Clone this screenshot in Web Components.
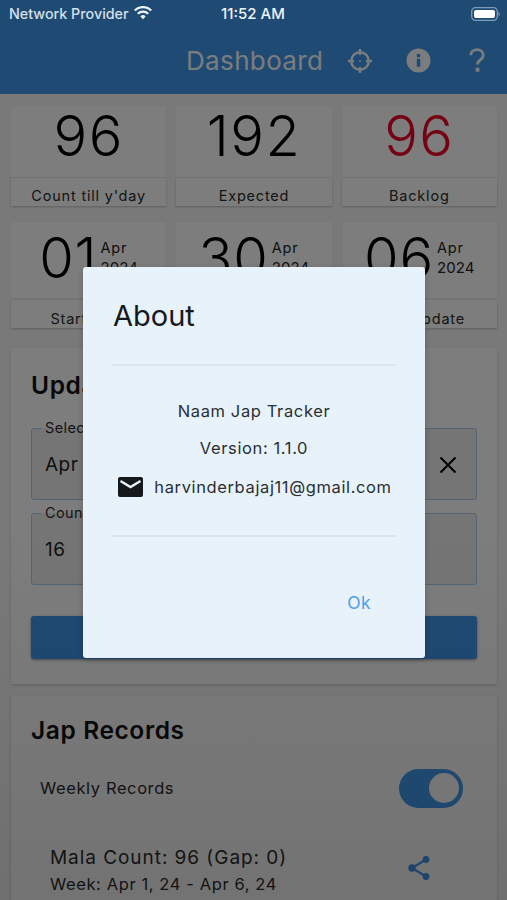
<!doctype html>
<html lang="en"><head><meta charset="utf-8"><title>Naam Jap Tracker</title>
<style>
html,body{margin:0;padding:0;height:900px;overflow:hidden;background:#eee;font-family:Inter,"Noto Sans",sans-serif}
</style></head><body>
<app-shell>
  <status-bar></status-bar>
  <app-bar></app-bar>
  <stat-row>
    <stat-card value="96" label="Count till y'day"></stat-card>
    <stat-card value="192" label="Expected"></stat-card>
    <stat-card value="96" label="Backlog" tone="bad"></stat-card>
  </stat-row>
  <stat-row class="dates">
    <stat-card value="01" month="Apr" year="2024" label="Start Date"></stat-card>
    <stat-card value="30" month="Apr" year="2024" label="End Date"></stat-card>
    <stat-card value="06" month="Apr" year="2024" label="Last Update"></stat-card>
  </stat-row>
  <update-card></update-card>
  <records-card></records-card>
  <about-dialog></about-dialog>
</app-shell>
<script>
function def(name, css, html){
  customElements.define(name, class extends HTMLElement{
    connectedCallback(){
      if(this.shadowRoot) return;
      const r=this.attachShadow({mode:'open'});
      r.innerHTML='<style>'+css+'</style>'+(typeof html==='function'?html(this):html);
    }
  });
}
def('app-shell',':host{display:block;position:relative;width:507px;height:900px;overflow:hidden;background:#f3f3f3}','<slot></slot>');
def('status-bar',`:host{display:flex;position:relative;z-index:3;height:27px;box-sizing:border-box;padding:0 7px 0 9px;align-items:center;color:#eef3f8;font-size:14.300px;font-weight:500;margin-bottom:-27px;justify-content:space-between}
 .l{display:flex;align-items:center;gap:5px;width:170px;color:#d4e0ea}
 .l svg{margin-top:-2px}
 .t{position:absolute;left:221px;top:5px;font-size:15px;line-height:18px;color:#eef3f8}
 .batt{width:29px;height:14px}`,`
 <div class="l"><span>Network Provider</span>
 <svg width="18" height="14" viewBox="0 0 18 14"><path d="M9 13.200 6.400 10.400a3.700 3.700 0 0 1 5.200 0zM4.600 8.600 3 6.900a8.500 8.500 0 0 1 12 0l-1.600 1.700a6.200 6.200 0 0 0-8.800 0zM1.500 5.300 0 3.700a12.700 12.700 0 0 1 18 0l-1.500 1.600a10.500 10.500 0 0 0-15 0z" fill="#eef3f8"/></svg></div>
 <span class="t">11:52 AM</span>
 <svg class="batt" viewBox="0 0 29 14"><rect x=".7" y=".7" width="25.600" height="12.600" rx="3.800" fill="none" stroke="#7f9ab4" stroke-width="1.300"/><rect x="3" y="3" width="21" height="8" rx="2" fill="#fff"/><path d="M27.500 5v4c.9-.4 1.300-1.100 1.300-2s-.4-1.600-1.300-2z" fill="#7f9ab4"/></svg>`);
def('app-bar',`:host{display:flex;height:94px;box-sizing:border-box;background:#3e94e6;padding:27px 0 0 186px;align-items:center;color:#f4f8fc}
 .t{font-size:26px;letter-spacing:.35px;width:136px;white-space:nowrap;margin-top:-1px}
 svg{display:block}
 .i{display:flex;align-items:center;justify-content:center;width:58.500px;height:40px}`,`
 <span class="t">Dashboard</span>
 <div class="i" style="margin-left:9px"><svg width="26" height="26" viewBox="0 0 26 26" fill="none" stroke="#f4f8fc" stroke-width="2.400"><circle cx="13" cy="13" r="8.800"/><path d="M13 1v6M13 19v6M1 13h6M19 13h6"/><circle cx="13" cy="13" r="1" fill="#f4f8fc" stroke="none"/></svg></div>
 <div class="i"><svg width="25" height="25" viewBox="0 0 25 25"><circle cx="12.500" cy="12.500" r="12" fill="#f4f8fc"/><rect x="10.800" y="10.800" width="3.500" height="8" rx=".6" fill="#3e94e6"/><circle cx="12.500" cy="7.600" r="1.900" fill="#3e94e6"/></svg></div>
 <div class="i"><svg width="16" height="25" viewBox="0 0 16 25" fill="none"><path d="M1.800 7.200C1.900 3.700 4.500 1.600 8 1.600c3.600 0 6.200 2.200 6.200 5.400 0 2.300-1.100 3.700-3 5-1.900 1.300-2.700 2.200-2.700 4.500" stroke="#f4f8fc" stroke-width="2.800"/><rect x="6.600" y="19.800" width="3.800" height="4" rx=".5" fill="#f4f8fc"/></svg></div>`);
def('stat-row',`:host{display:grid;grid-template-columns:repeat(3,1fr);gap:10px;padding:12px 10px 0 11px;box-sizing:border-box}
 :host(.dates){padding-top:16px}`,'<slot></slot>');
def('stat-card',`:host{display:block;color:#000}
 .top{height:71px;background:#fafafa;box-shadow:0 1px 2px rgba(0,0,0,.07);display:flex;align-items:center;justify-content:center;gap:3px;box-sizing:border-box;padding-bottom:11px}
 :host([month]) .top{height:76px;padding-bottom:4px}
 .v{font-size:56px;line-height:48px;font-weight:300;letter-spacing:1.500px}
 :host([month]) .v{letter-spacing:.8px}
 :host([tone=bad]) .v{color:#ec0022}
 .d{display:flex;flex-direction:column;font-size:14.500px;line-height:20px;letter-spacing:.8px;margin-top:-1px;color:#222}
 .d b{font-weight:400}.d .y{font-size:15px;letter-spacing:.1px}
 .lab{height:28px;margin-top:1px;box-sizing:border-box;padding-top:7px;background:#fafafa;box-shadow:0 1px 2px rgba(0,0,0,.22);display:flex;align-items:center;justify-content:center;font-size:14.500px;letter-spacing:.8px;color:#2b2b2b;white-space:nowrap}
 :host([month]) .lab{margin-top:2px;padding-top:8px}`,
 el=>`<div class="top"><span class="v">${el.getAttribute('value')}</span>${el.hasAttribute('month')?`<span class="d"><b>${el.getAttribute('month')}</b><b class="y">${el.getAttribute('year')}</b></span>`:''}</div><div class="lab">${el.getAttribute('label')}</div>`);
def('update-card',`:host{display:block;margin:20px 10px 0 11px;height:336px;background:#fafafa;box-shadow:0 1px 3px rgba(0,0,0,.18);box-sizing:border-box;padding:21px 20px 0 20px}
 h2{margin:0;font-size:24.500px;line-height:32px;font-weight:600;letter-spacing:.6px;color:#111}
 .stack{display:flex;flex-direction:column;gap:13px;margin-top:27px}
 .btn{margin-top:31px;height:43px;border-radius:3px;background:#3e94e6;box-shadow:0 1px 3px rgba(0,0,0,.4)}`,
 `<h2>Update Count</h2><div class="stack"><field-box label="Select Date" value="Apr 7, 2024" clear style="height:72px"></field-box><field-box label="Count" value="16" style="height:72px"></field-box></div><div class="btn"></div>`);
def('field-box',`:host{position:relative;border:1.500px solid #a8c8e8;border-radius:3px;box-sizing:border-box;display:flex;align-items:center;justify-content:space-between;padding:1px 19px 0 13px;font-size:19px;letter-spacing:.5px;color:#222;background:#eaeaea}
 .lab{position:absolute;left:9px;top:-10px;padding:0 4px;background:linear-gradient(#fafafa 50%,#eaeaea 50%);font-size:14.500px;line-height:18px;letter-spacing:.4px;color:#2b2b2b}`,
 el=>`<span class="lab">${el.getAttribute('label')}</span><span>${el.getAttribute('value')}</span>${el.hasAttribute('clear')?`<svg width="18" height="18" viewBox="0 0 18 18" stroke="#000" stroke-width="2"><path d="M1.500 1.500l15 15M16.500 1.500l-15 15"/></svg>`:''}`);
def('records-card',`:host{display:block;margin:12px 10px 0 11px;height:260px;background:#fafafa;box-shadow:0 1px 3px rgba(0,0,0,.18);box-sizing:border-box;padding:18px 20px 0 20px}
 h2{margin:0;font-size:24.500px;line-height:32px;font-weight:600;letter-spacing:.6px;color:#111}
 .sw{display:flex;align-items:center;justify-content:space-between;margin:22px 14px 0 9px;height:40px;font-size:16.500px;letter-spacing:.6px;color:#2b2b2b}
 .tog{width:64px;height:39px;border-radius:20px;background:#4198ea;display:flex;align-items:center;justify-content:flex-end;padding-right:4px;box-sizing:border-box}
 .tog i{display:block;width:30px;height:30px;border-radius:50%;background:#fafafa}
 .rec{display:flex;justify-content:space-between;align-items:center;margin:36px 46px 0 19px}
 .rec svg{margin-top:-6px}
 .m{font-size:19px;line-height:27px;letter-spacing:.95px;color:#2b2b2b}
 .w{font-size:16.500px;line-height:27px;letter-spacing:.6px;color:#2b2b2b}`,
 `<h2>Jap Records</h2><div class="sw"><span>Weekly Records</span><div class="tog"><i></i></div></div>
 <div class="rec"><div><div class="m">Mala Count: 96 (Gap: 0)</div><div class="w">Week: Apr 1, 24 - Apr 6, 24</div></div>
 <svg width="24" height="26" viewBox="0 0 24 26" fill="#3e94e6" stroke="#3e94e6"><path d="M19 4.500 5 13l14 8.500" fill="none" stroke-width="2.200"/><circle cx="19" cy="4.500" r="3.400" stroke="none"/><circle cx="5" cy="13" r="3.700" stroke="none"/><circle cx="19" cy="21.500" r="3.400" stroke="none"/></svg></div>`);
def('about-dialog',`:host{position:absolute;inset:0;z-index:2;background:linear-gradient(rgba(0,0,0,.5) 0 60%,rgba(0,0,0,.54));display:block}
 .dlg{position:absolute;left:83px;top:267px;width:342px;height:391px;background:#e8f2fa;border-radius:3px;box-shadow:0 2px 6px rgba(0,0,0,.2);box-sizing:border-box;padding:0 29px;display:flex;flex-direction:column;color:#222}
 h3{margin:0;height:99px;box-sizing:border-box;padding:31px 0 0 1px;font-size:29px;line-height:36px;font-weight:400;color:#15191c;border-bottom:2px solid #dbe5ee}
 .body{display:flex;flex-direction:column;align-items:center;height:171px;box-sizing:border-box;border-bottom:2px solid #dbe5ee;padding-top:35px;font-size:16.500px;letter-spacing:.62px;color:#2a2f33}
 .body p{margin:0;height:37px;line-height:21px}
 .mail{display:flex;align-items:center;gap:11px;margin:-1px 0 0 2px;white-space:nowrap;height:26px}
 .ok{margin:54px 0 0 auto;padding-right:25px;font-size:17.500px;line-height:24px;letter-spacing:.4px;color:#4f9de3}`,
 `<div class="dlg" role="dialog"><h3>About</h3><div class="body"><p>Naam Jap Tracker</p><p>Version: 1.1.0</p><div class="mail"><svg width="25" height="20" viewBox="0 0 25 20"><path d="M2 0h21a2 2 0 0 1 2 2v16a2 2 0 0 1-2 2H2a2 2 0 0 1-2-2V2a2 2 0 0 1 2-2z" fill="#15191c"/><path d="M2.500 4 12.500 10l10-6" fill="none" stroke="#e8f2fa" stroke-width="2.400"/></svg><span>harvinderbajaj11@gmail.com</span></div></div><div class="ok">Ok</div></div>`);
</script>
</body></html>
